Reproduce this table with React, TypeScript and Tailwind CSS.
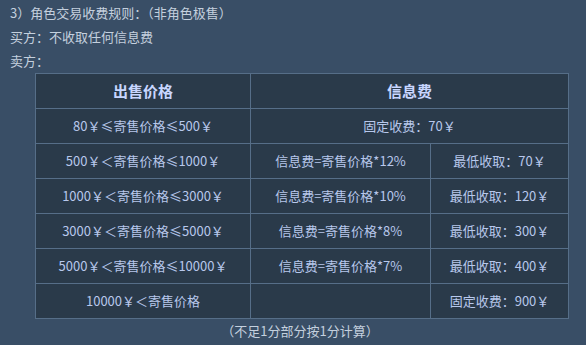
const rows = [
  { price: "80￥≤寄售价格≤500￥", fee: "固定收费：70￥", min: null },
  { price: "500￥＜寄售价格≤1000￥", fee: "信息费=寄售价格*12%", min: "最低收取：70￥" },
  { price: "1000￥＜寄售价格≤3000￥", fee: "信息费=寄售价格*10%", min: "最低收取：120￥" },
  { price: "3000￥＜寄售价格≤5000￥", fee: "信息费=寄售价格*8%", min: "最低收取：300￥" },
  { price: "5000￥＜寄售价格≤10000￥", fee: "信息费=寄售价格*7%", min: "最低收取：400￥" },
  { price: "10000￥＜寄售价格", fee: "", min: "固定收费：900￥" },
];

export default function App() {
  return (
    <div
      className="w-[586px] h-[345px] bg-[#394e66] text-[#c4d0de] text-[13px] overflow-hidden"
      style={{ fontFamily: '"Noto Sans CJK SC", "DejaVu Sans", sans-serif' }}
    >
      <div className="pl-[10px] pt-[1px] leading-[24px]">
        <p>3）角色交易收费规则：（非角色极售）</p>
        <p>买方：不收取任何信息费</p>
        <p>卖方：</p>
      </div>
      <table className="ml-[35px] w-[533px] border-collapse bg-[#2a3a4a] text-[#b8c8ec] table-fixed">
        <colgroup>
          <col className="w-[215px]" />
          <col className="w-[180px]" />
          <col className="w-[138px]" />
        </colgroup>
        <thead>
          <tr className="h-[35px]">
            <th className="border border-[#566e88] text-[15px] font-bold text-[#c8d6ff]">出售价格</th>
            <th colSpan={2} className="border border-[#566e88] text-[15px] font-bold text-[#c8d6ff]">信息费</th>
          </tr>
        </thead>
        <tbody>
          {rows.map((r) => (
            <tr key={r.price} className="h-[35px]">
              <td className="border border-[#566e88] text-center">{r.price}</td>
              {r.min === null ? (
                <td colSpan={2} className="border border-[#566e88] text-center">{r.fee}</td>
              ) : (
                <>
                  <td className="border border-[#566e88] text-center">{r.fee}</td>
                  <td className="border border-[#566e88] text-center">{r.min}</td>
                </>
              )}
            </tr>
          ))}
        </tbody>
      </table>
      <p className="text-center pl-[14px] mt-[1px] leading-[22px]">（不足1分部分按1分计算）</p>
    </div>
  );
}
